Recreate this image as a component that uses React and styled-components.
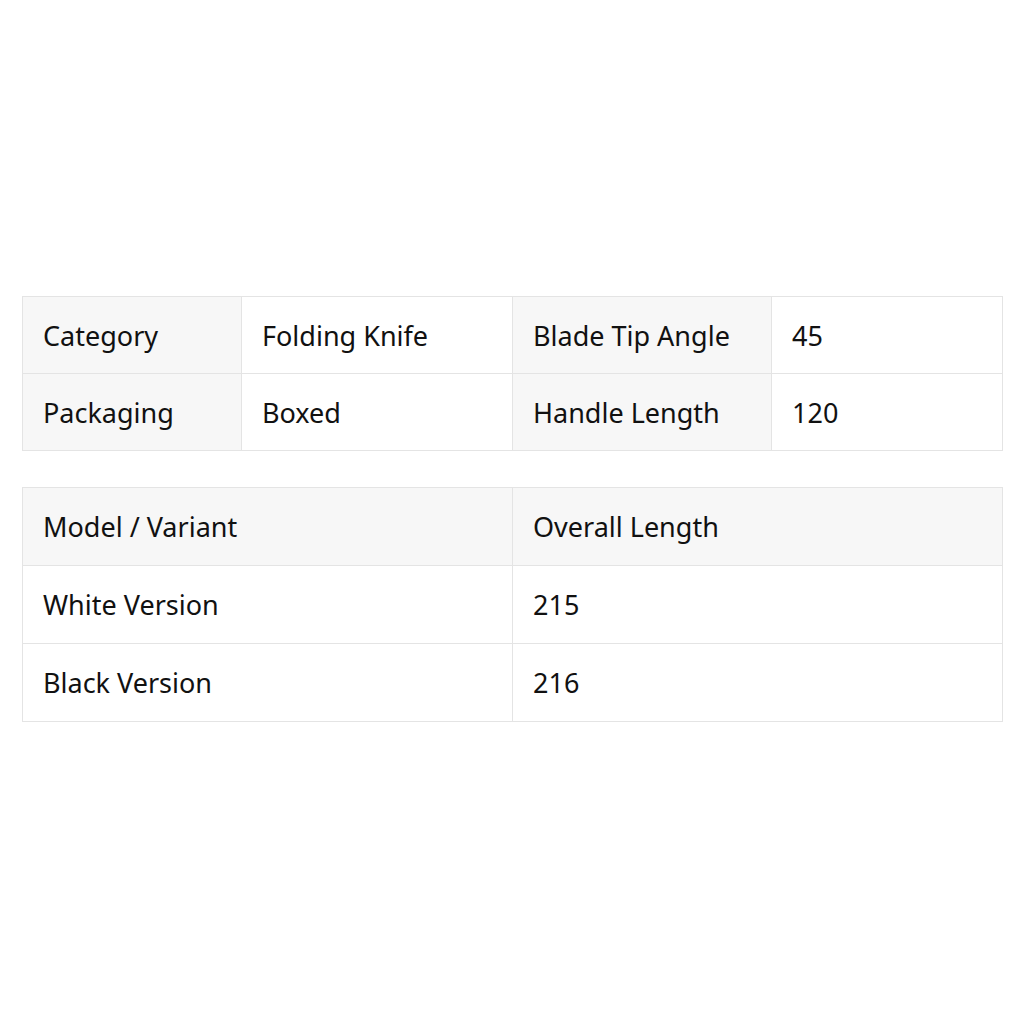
import React from 'react';
import styled, {createGlobalStyle} from 'styled-components';

const BORDER = '#e4e4e4';

const GlobalStyle = createGlobalStyle`
	body {
		margin: 0;
		background: #ffffff;
		font-family: 'Noto Sans', 'Liberation Sans', sans-serif;
		color: #111111;
	}
`;

const Page = styled.div`
	display: flex;
	flex-direction: column;
	gap: 36px;
	padding: 296px 21px 0 22px;
`;

const Grid = styled.div`
	display: grid;
	grid-template-columns: ${(p) => p.$cols};
	grid-auto-rows: ${(p) => p.$row || 76}px;
	gap: 1px;
	width: 981px;
	box-sizing: border-box;
	border: 1px solid ${BORDER};
	background: ${BORDER};
`;

const Cell = styled.div`
	display: flex;
	align-items: center;
	padding-left: 20px;
	background: ${(p) => (p.$label ? '#f7f7f7' : '#ffffff')};
	font-size: 27px;
	line-height: 1;
	white-space: nowrap;
`;

const specs = [
	['Category', 'Folding Knife', 'Blade Tip Angle', '45'],
	['Packaging', 'Boxed', 'Handle Length', '120'],
];

const variants = [
	['White Version', '215'],
	['Black Version', '216'],
];

const App = () => (
	<>
		<GlobalStyle />
		<Page>
			<Grid $cols='218px 270px 258px 1fr'>
				{specs.map((row) => (
					<React.Fragment key={row[0]}>
						<Cell $label>{row[0]}</Cell>
						<Cell>{row[1]}</Cell>
						<Cell $label>{row[2]}</Cell>
						<Cell>{row[3]}</Cell>
					</React.Fragment>
				))}
			</Grid>
			<Grid $cols='489px 1fr' $row={77}>
				<Cell $label>Model / Variant</Cell>
				<Cell $label>Overall Length</Cell>
				{variants.map((row) => (
					<React.Fragment key={row[0]}>
						<Cell>{row[0]}</Cell>
						<Cell>{row[1]}</Cell>
					</React.Fragment>
				))}
			</Grid>
		</Page>
	</>
);

export default App;
